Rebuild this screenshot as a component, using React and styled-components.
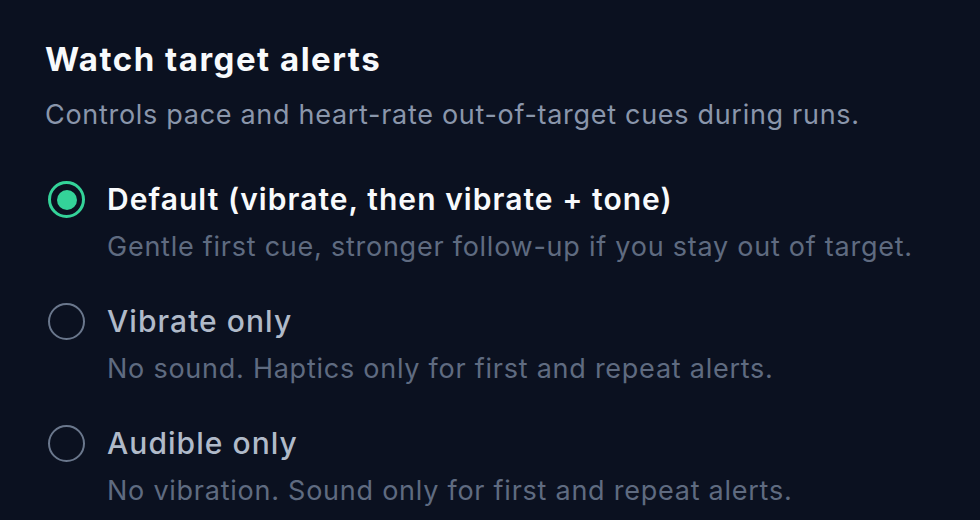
import React, { useState } from 'react'
import styled, { createGlobalStyle } from 'styled-components'

const GlobalStyle = createGlobalStyle`
  html, body {
    margin: 0;
    background: #0b1120;
  }
  body {
    font-family: Inter, "Noto Sans", sans-serif;
    -webkit-font-smoothing: antialiased;
  }
`

const Panel = styled.section`
  padding: 39px 45px 0;
  display: flex;
  flex-direction: column;
`

const Title = styled.h2`
  margin: 0;
  font-size: 33px;
  line-height: 40px;
  font-weight: 700;
  color: #f8fafc;
  letter-spacing: 1.5px;
`

const Subtitle = styled.p`
  margin: 19px 0 0 0;
  font-size: 27px;
  line-height: 34px;
  color: #8a96ab;
  letter-spacing: 0.7px;
`

const Options = styled.div`
  margin-top: 47px;
  display: flex;
  flex-direction: column;
  gap: 37px;
`

const Option = styled.label`
  display: grid;
  grid-template-columns: 40px 1fr;
  column-gap: 22px;
  align-items: start;
  cursor: pointer;
`

const Radio = styled.span`
  box-sizing: border-box;
  width: 37px;
  height: 37px;
  margin: 2px 0 0 3px;
  border-radius: 50%;
  border: ${p => (p.$checked ? '3px solid #34d399' : '2.5px solid #6a778c')};
  display: flex;
  align-items: center;
  justify-content: center;
  &::after {
    content: '';
    width: 20px;
    height: 20px;
    border-radius: 50%;
    background: #34d399;
    display: ${p => (p.$checked ? 'block' : 'none')};
  }
`

const Label = styled.div`
  font-size: 30px;
  line-height: 40px;
  font-weight: ${p => (p.$checked ? 600 : 500)};
  color: ${p => (p.$checked ? '#f8fafc' : '#b0bac9')};
  letter-spacing: 1.05px;
`

const Description = styled.div`
  margin-top: 11px;
  font-size: 27px;
  line-height: 34px;
  color: #5f6b80;
  letter-spacing: 0.75px;
`

const choices = [
  {
    id: 'default',
    label: 'Default (vibrate, then vibrate + tone)',
    hint: 'Gentle first cue, stronger follow-up if you stay out of target.',
  },
  {
    id: 'vibrate',
    label: 'Vibrate only',
    hint: 'No sound. Haptics only for first and repeat alerts.',
  },
  {
    id: 'audible',
    label: 'Audible only',
    hint: 'No vibration. Sound only for first and repeat alerts.',
  },
]

export default function App() {
  const [mode, setMode] = useState('default')

  return (
    <>
      <GlobalStyle />
      <Panel>
        <Title>Watch target alerts</Title>
        <Subtitle>Controls pace and heart-rate out-of-target cues during runs.</Subtitle>
        <Options>
          {choices.map(c => (
            <Option key={c.id} onClick={() => setMode(c.id)}>
              <Radio $checked={mode === c.id} />
              <div>
                <Label $checked={mode === c.id}>{c.label}</Label>
                <Description>{c.hint}</Description>
              </div>
            </Option>
          ))}
        </Options>
      </Panel>
    </>
  )
}
